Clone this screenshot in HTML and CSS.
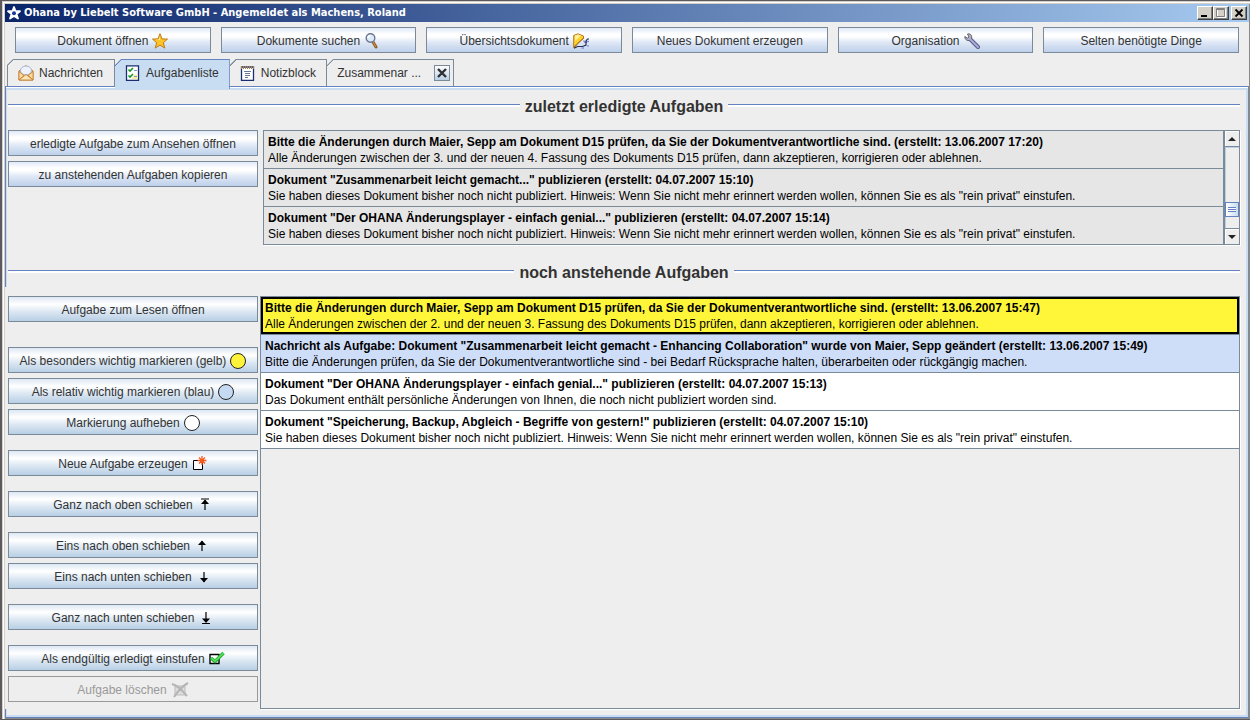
FILE: index.html
```html
<!DOCTYPE html>
<html lang="de">
<head>
<meta charset="utf-8">
<title>Ohana by Liebelt Software GmbH</title>
<link rel="stylesheet" href="styles.css">
</head>
<body>
<div class="window">
  <header class="titlebar">
    <svg class="app-icon" viewBox="0 0 16 16" aria-hidden="true"><path d="M8 2l1.500 4 4.500.2-3.500 2.800 1.500 4.500L8 11l-4 2.500L5.500 9 2 6.200 6.500 6z" fill="#fff" stroke="#fff" stroke-width="1.800" stroke-linejoin="round"/><circle cx="8" cy="8.200" r="2" fill="#1c3a9a"/></svg>
    <h1 class="title">Ohana by Liebelt Software GmbH - Angemeldet als Machens, Roland</h1>
    <div class="window-controls">
      <button class="win-btn" aria-label="Minimieren"><svg viewBox="0 0 12 10"><path d="M2 7h6v2H2z"/></svg></button>
      <button class="win-btn" aria-label="Maximieren"><svg viewBox="0 0 12 10"><path d="M2.500 2v7.500h8V1" fill="none" stroke="#fff"/><path d="M1.500.5h8v8h-8zM1 1.500h9" fill="none" stroke="#808080"/></svg></button>
      <button class="win-btn win-close" aria-label="Schließen"><svg viewBox="0 0 12 10"><path d="M2.500 1.500l7 7m0-7l-7 7" stroke="#000" stroke-width="1.800"/></svg></button>
    </div>
  </header>

  <nav class="toolbar" aria-label="Hauptfunktionen">
    <button class="btn btn-cool">Dokument öffnen
      <svg class="icon" viewBox="0 0 16 16"><path d="M8 .7l2 5.200 5.500.2-4.200 3.600 1.500 5.400L8 12.100l-4.800 3L4.700 9.700.5 6.100 6 5.900z" fill="#ffc428" stroke="#c07a10"/><path d="M8 3v4L3 7l4-.5z" fill="#fff3a0"/></svg></button>
    <button class="btn btn-cool">Dokumente suchen
      <svg class="icon" viewBox="0 0 16 16"><path d="M9 9l3 5" stroke="#8c5a20" stroke-width="3" stroke-linecap="round"/><path d="M9 9l3 5" stroke="#d9a04a"/><circle cx="6.500" cy="5" r="4.300" fill="#dcebfb" stroke="#6a7690" stroke-width="1.400"/><path d="M4 5a2.500 2.500 0 0 1 2.500-2.500" fill="none" stroke="#fff" stroke-width="1.300"/></svg></button>
    <button class="btn btn-cool">Übersichtsdokument
      <svg class="icon" viewBox="0 0 16 16"><path d="M.7 14.500V2.500L5 .8l5.500 2.200v2.500L3.500 11z" fill="#ffd22e" stroke="#b8741a"/><path d="M1 15l3.500-4 6-6" fill="none" stroke="#a86a10"/><path d="M2 2.500l3-1 3 1L2 8z" fill="#fff0a0"/><path d="M1 15.200l3.500-1.700h5l3.500-1.500V8l1.500-2H16M11 9h3" fill="none" stroke="#2a2f50" stroke-width="1.200"/><path d="M8.500 15h2.500M14 8.500h2M15 12v2M10.500 7.500l1.500 2" stroke="#8490f4" stroke-width="1.300"/></svg></button>
    <button class="btn btn-cool">Neues Dokument erzeugen</button>
    <button class="btn btn-cool">Organisation
      <svg class="icon" viewBox="0 0 16 16"><path d="M6 6l8 8" stroke="#5a5a86" stroke-width="4" stroke-linecap="round"/><path d="M3.500 1C6 .2 8 2 7.700 5 7 7 5.500 8 4 7.500 2 7.200.8 6 .8 3.500l2.500 1.700L5 4z" fill="#b4b4bc" stroke="#606070"/><path d="M6 6l8 8" stroke="#a9acd8" stroke-width="2.200" stroke-linecap="round"/></svg></button>
    <button class="btn btn-cool">Selten benötigte Dinge</button>
  </nav>

  <div class="tabs" role="tablist">
    <button class="tab" role="tab" aria-selected="false">
      <svg class="icon" viewBox="0 0 16 16"><path d="M1 6l7-5.300L15 6v9H1z" fill="#f3bd6c" stroke="#c07828"/><ellipse cx="8" cy="5.500" rx="5.500" ry="4.500" fill="#eef2fb" stroke="#a8b4d8"/><path d="M1 6.500l5 4-5 4.500zM15 6.500l-5 4 5 4.500z" fill="#fbd99a" stroke="#c07828" stroke-width=".7"/><path d="M1 15l7-5.500 7 5.500z" fill="#fce5b8" stroke="#c07828" stroke-width=".8"/></svg>
      Nachrichten</button>
    <button class="tab tab-active" role="tab" aria-selected="true">
      <svg class="icon" viewBox="0 0 16 16"><path d="M1.500.8h12v14.500h-12z" fill="#fff" stroke="#1c2c70" stroke-width="1.300"/><path d="M9 10h4v4H7z" fill="#f5f0a0"/><path d="M3.500 4.500l1.500 1.500 3-3M3.500 10.500l1.500 1.500 3-3" fill="none" stroke="#149a28" stroke-width="1.600"/><path d="M9 5.500h3M9 11.500h3" stroke="#8494c0"/></svg>
      Aufgabenliste</button>
    <button class="tab" role="tab" aria-selected="false">
      <svg class="icon" viewBox="0 0 16 16"><path d="M1.500 2h12v13.300h-12z" fill="#fff" stroke="#1c2c70" stroke-width="1.300"/><path d="M1.500 1v3M3.500 1v3M5.500 1v3M7.500 1v3M9.500 1v3M11.500 1v3M13.500 1v3" stroke="#a28450"/><path d="M4 6.500h7M5 8.500h5M5 10.500h5M5 12.500h3" stroke="#6a7694"/></svg>
      Notizblock</button>
    <div class="tab tab-closable">
      <button class="tab-label" role="tab" aria-selected="false">Zusammenar ...</button>
      <button class="tab-close" aria-label="Tab schließen"><svg viewBox="0 0 14 14"><path d="M3 3l8 8m0-8l-8 8" stroke="#303030" stroke-width="2.400"/></svg></button>
    </div>
  </div>

  <main class="panel">
    <h2 class="section-title">zuletzt erledigte Aufgaben</h2>
    <section class="section section-done">
      <div class="actions">
        <button class="btn btn-cool">erledigte Aufgabe zum Ansehen öffnen</button>
        <button class="btn btn-cool">zu anstehenden Aufgaben kopieren</button>
      </div>
      <div class="scroll-list">
        <ul class="tasks tasks-done">
          <li class="task"><strong>Bitte die Änderungen durch Maier, Sepp am Dokument D15 prüfen, da Sie der Dokumentverantwortliche sind. (erstellt: 13.06.2007 17:20)</strong><span>Alle Änderungen zwischen der 3. und der neuen 4. Fassung des Dokuments D15 prüfen, dann akzeptieren, korrigieren oder ablehnen.</span></li>
          <li class="task"><strong>Dokument "Zusammenarbeit leicht gemacht..." publizieren (erstellt: 04.07.2007 15:10)</strong><span>Sie haben dieses Dokument bisher noch nicht publiziert. Hinweis: Wenn Sie nicht mehr erinnert werden wollen, können Sie es als "rein privat" einstufen.</span></li>
          <li class="task"><strong>Dokument "Der OHANA Änderungsplayer - einfach genial..." publizieren (erstellt: 04.07.2007 15:14)</strong><span>Sie haben dieses Dokument bisher noch nicht publiziert. Hinweis: Wenn Sie nicht mehr erinnert werden wollen, können Sie es als "rein privat" einstufen.</span></li>
        </ul>
        <div class="scrollbar">
          <button class="scroll-btn" aria-label="Nach oben"><svg viewBox="0 0 8 4"><path d="M4 0l4 4H0z"/></svg></button>
          <div class="scroll-track"><div class="scroll-thumb"></div></div>
          <button class="scroll-btn scroll-down" aria-label="Nach unten"><svg viewBox="0 0 8 4"><path d="M0 0h8L4 4z"/></svg></button>
        </div>
      </div>
    </section>

    <h2 class="section-title">noch anstehende Aufgaben</h2>
    <section class="section section-open">
      <div class="actions">
        <button class="btn">Aufgabe zum Lesen öffnen</button>
        <div class="action-group action-group-marks">
          <button class="btn">Als besonders wichtig markieren (gelb)
            <svg class="icon" viewBox="0 0 16 16"><circle cx="8" cy="8" r="7.500" fill="#fff33a" stroke="#222"/></svg></button>
          <button class="btn">Als relativ wichtig markieren (blau)
            <svg class="icon" viewBox="0 0 16 16"><circle cx="8" cy="8" r="7.500" fill="#c5daf2" stroke="#222"/></svg></button>
          <button class="btn">Markierung aufheben
            <svg class="icon" viewBox="0 0 16 16"><circle cx="8" cy="8" r="7.500" fill="#fff" stroke="#222"/></svg></button>
        </div>
        <button class="btn">Neue Aufgabe erzeugen
          <svg class="icon" viewBox="0 0 16 16"><path d="M1.500 4.500h9v9h-9z" fill="#fff" stroke="#000"/><path d="M10 0v9M5.500 4.500h9M7 1.500l6 6M13 1.500l-6 6" stroke="#f4591e" stroke-width="1.300"/></svg></button>
        <button class="btn">Ganz nach oben schieben
          <svg class="icon icon-arrow" viewBox="0 0 8 16"><path d="M0 2h8M4 3v10" stroke="#000" stroke-width="1.200"/><path d="M4 2.500L8 7H0z"/></svg></button>
        <div class="action-group">
          <button class="btn">Eins nach oben schieben
            <svg class="icon icon-arrow" viewBox="0 0 8 16"><path d="M4 3v10" stroke="#000" stroke-width="1.200"/><path d="M4 2.500L8 7H0z"/></svg></button>
          <button class="btn">Eins nach unten schieben
            <svg class="icon icon-arrow" viewBox="0 0 8 16"><path d="M4 3v10" stroke="#000" stroke-width="1.200"/><path d="M4 13.500L8 9H0z"/></svg></button>
        </div>
        <button class="btn">Ganz nach unten schieben
          <svg class="icon icon-arrow" viewBox="0 0 8 16"><path d="M0 13.500h8M4 2v10" stroke="#000" stroke-width="1.200"/><path d="M4 13L8 8.500H0z"/></svg></button>
        <div class="action-group">
          <button class="btn">Als endgültig erledigt einstufen
            <svg class="icon" viewBox="0 0 16 16"><path d="M1 3.500h9v9H1z" fill="#fff" stroke="#000" stroke-width="1.400"/><path d="M2 7l4 3.500L14.500 2" fill="none" stroke="#1f9a2c" stroke-width="3.400"/><path d="M2.200 7L6 10.200 14.500 2" fill="none" stroke="#4fe05a" stroke-width="2"/></svg></button>
          <button class="btn" disabled>Aufgabe löschen
            <svg class="icon icon-wide" viewBox="0 0 18 16"><path d="M4 4h10v9H4z" fill="#ddd" stroke="#bbb"/><path d="M1 2c5 1 10 6 15 12M17 1C11 4 7 9 3 15" fill="none" stroke="#b4b4b4" stroke-width="2"/></svg></button>
        </div>
      </div>
      <ul class="tasks tasks-open">
        <li class="task task-yellow"><strong>Bitte die Änderungen durch Maier, Sepp am Dokument D15 prüfen, da Sie der Dokumentverantwortliche sind. (erstellt: 13.06.2007 15:47)</strong><span>Alle Änderungen zwischen der 2. und der neuen 3. Fassung des Dokuments D15 prüfen, dann akzeptieren, korrigieren oder ablehnen.</span></li>
        <li class="task task-blue"><strong>Nachricht als Aufgabe: Dokument "Zusammenarbeit leicht gemacht - Enhancing Collaboration" wurde von Maier, Sepp geändert (erstellt: 13.06.2007 15:49)</strong><span>Bitte die Änderungen prüfen, da Sie der Dokumentverantwortliche sind - bei Bedarf Rücksprache halten, überarbeiten oder rückgängig machen.</span></li>
        <li class="task"><strong>Dokument "Der OHANA Änderungsplayer - einfach genial..." publizieren (erstellt: 04.07.2007 15:13)</strong><span>Das Dokument enthält persönliche Änderungen von Ihnen, die noch nicht publiziert worden sind.</span></li>
        <li class="task"><strong>Dokument "Speicherung, Backup, Abgleich - Begriffe von gestern!" publizieren (erstellt: 04.07.2007 15:10)</strong><span>Sie haben dieses Dokument bisher noch nicht publiziert. Hinweis: Wenn Sie nicht mehr erinnert werden wollen, können Sie es als "rein privat" einstufen.</span></li>
      </ul>
    </section>
  </main>
</div>
</body>
</html>
```
FILE: styles.css
```css
* { box-sizing: border-box; }

body {
  margin: 0;
  background: #5c5a5c;
  color: #333;
  font: 12px/16px "Liberation Sans", Arial, sans-serif;
}

button {
  margin: 0;
  padding: 0;
  border: 0;
  background: none;
  color: inherit;
  font: inherit;
}

h1, h2, ul { margin: 0; padding: 0; }
ul { list-style: none; }

.window {
  display: flex;
  flex-direction: column;
  min-height: 100vh;
  border: solid #5c5a5c;
  border-width: 1px 0 1px 2px;
  padding: 3px 1px 1px 3px;
  background: #eee;
  box-shadow: inset 1px 1px #d4d0c8, inset 2px 2px #fff, inset 3px 3px #d4d0c8, inset -1px -1px #8c8a88;
}

.titlebar {
  display: flex;
  align-items: center;
  height: 18px;
  padding: 0 2px 0 1px;
  background: linear-gradient(to right, #0a246a, #a6caf0);
  color: #fff;
}
.app-icon { width: 16px; height: 16px; margin-right: 2px; }
.title {
  flex: 1;
  font: bold 11px/18px "DejaVu Sans Condensed", "DejaVu Sans", sans-serif;
}
.window-controls { display: flex; }
.win-btn {
  display: flex;
  align-items: center;
  justify-content: center;
  width: 16px;
  height: 14px;
  border: 1px solid;
  border-color: #fff #404040 #404040 #fff;
  background: #d4d0c8;
  box-shadow: inset -1px -1px #808080;
}
.win-btn svg { width: 12px; height: 10px; }
.win-close { margin-left: 2px; }

.toolbar {
  display: grid;
  grid-template-columns: repeat(6, 1fr);
  gap: 10px;
  padding: 5px 10px 6px;
}

.btn {
  display: flex;
  align-items: center;
  justify-content: center;
  gap: 4px;
  height: 26px;
  padding-top: 1px;
  border: 1px solid #7a8a99;
  background: linear-gradient(#dde8f3, #fff 30%, #dde8f3 60%, #b8cfe5);
  white-space: nowrap;
}
.btn-cool { background: linear-gradient(#e0e8f8, #fff 25%, #fff 35%, #dfe8f6 60%, #bdd0ea); }
.btn:disabled {
  border-color: #999;
  background: #eee;
  color: #999;
}
.icon { flex: none; width: 16px; height: 16px; }
.icon-arrow { width: 8px; margin: 0 4px; }
.icon-wide { width: 18px; }

.tabs { display: flex; padding-left: 2px; }
.tab {
  display: flex;
  align-items: center;
  gap: 5px;
  height: 27px;
  padding: 0 10px 0 9px;
  border: 1px solid #7a8a99;
  border-bottom: 0;
  border-left-color: transparent;
  background: linear-gradient(135deg, #7a8a99 5px, #eee 5px) border-box;
  clip-path: polygon(6px 0, 100% 0, 100% 100%, 0 100%, 0 6px);
  white-space: nowrap;
}
.tab:first-child {
  padding: 0 11px 0 10px;
  border-left-color: #7a8a99;
}
.tab-active {
  z-index: 1;
  height: 30px;
  margin-bottom: -3px;
  padding-bottom: 3px;
  border-color: #6382bf;
  border-left-color: transparent;
  background: linear-gradient(135deg, #6382bf 5px, #c8ddf2 5px) border-box;
}
.tab-closable { gap: 13px; padding-right: 3px; }
.tab-close {
  width: 16px;
  height: 16px;
  border: 1px solid #7a8a99;
  background: linear-gradient(#fff, #b8cfe5);
}
.tab-close svg { display: block; width: 14px; height: 14px; }

.panel {
  flex: 1;
  display: flex;
  flex-direction: column;
  padding: 4px 8px 8px 2px;
  border: 1px solid #6382bf;
  border-right-color: #7a8a99;
  box-shadow: inset 0 1px #fff, inset 0 3px #c8ddf2, inset -2px -2px #c8ddf2, inset 1px 0 #c8ddf2;
}

.section-title {
  display: flex;
  align-items: center;
  gap: 5px;
  height: 30px;
  padding-top: 2px;
  font-size: 16px;
  line-height: 28px;
}
.section-title::before,
.section-title::after {
  content: "";
  flex: 1;
  height: 2px;
  margin-bottom: 4px;
  border-top: 1px solid #6382bf;
  background: #fff;
}

.section { display: flex; }
.section-done { gap: 5px; margin: 9px 0 12px; }
/* covers the panel's left edge beside the open tasks */
.section-open {
  flex: 1;
  gap: 2px;
  margin-left: -3px;
  padding: 9px 0 0 3px;
  background: #eee;
}
.actions {
  display: flex;
  flex-direction: column;
  flex: none;
  width: 250px;
}
.section-done .actions { gap: 5px; }
.section-open .actions { gap: 15px; }
.action-group { display: flex; flex-direction: column; gap: 5px; }
.action-group-marks { margin-top: 10px; }

.scroll-list {
  flex: 1;
  display: flex;
  min-width: 0;
  border: 1px solid #7a8a99;
  border-bottom: 0;
  box-shadow: 1px 1px #fff;
}
.tasks { flex: 1; min-width: 0; color: #000; }
.task {
  padding: 3px 4px 2px;
  border-bottom: 1px solid #7a8a99;
  background: #fff;
}
.task strong, .task span {
  display: block;
  overflow: hidden;
  white-space: nowrap;
}
.tasks-done .task { background: #e6e6e6; }
.tasks-open {
  border: 1px solid #7a8a99;
  box-shadow: 1px 1px #fff;
}
.tasks-open .task-yellow {
  background: #fff63a;
  box-shadow: inset 0 0 0 2px #000;
}
.tasks-open .task-blue { background: #cfdef8; }

.scrollbar {
  display: flex;
  flex-direction: column;
  flex: none;
  width: 16px;
  border-left: 2px solid #7a8a99;
  border-bottom: 1px solid #7a8a99;
}
.scroll-btn {
  display: flex;
  align-items: center;
  justify-content: center;
  height: 16px;
  border-bottom: 1px solid #7a8a99;
  box-shadow: inset 1px 1px #fff;
}
.scroll-down { border-top: 1px solid #7a8a99; border-bottom: 0; }
.scroll-btn svg { width: 8px; height: 4px; fill: #222; }
.scroll-track {
  flex: 1;
  display: flex;
  flex-direction: column;
  justify-content: flex-end;
  padding-bottom: 11px;
  box-shadow: inset 1px 1px #b8cfe5;
}
.scroll-thumb {
  height: 15px;
  padding: 4px 2px;
  border: 1px solid #6382bf;
  background: repeating-linear-gradient(#6382bf 0 1px, #fff 1px 2px) content-box, linear-gradient(to right, #fff, #c8ddf2);
}
```
